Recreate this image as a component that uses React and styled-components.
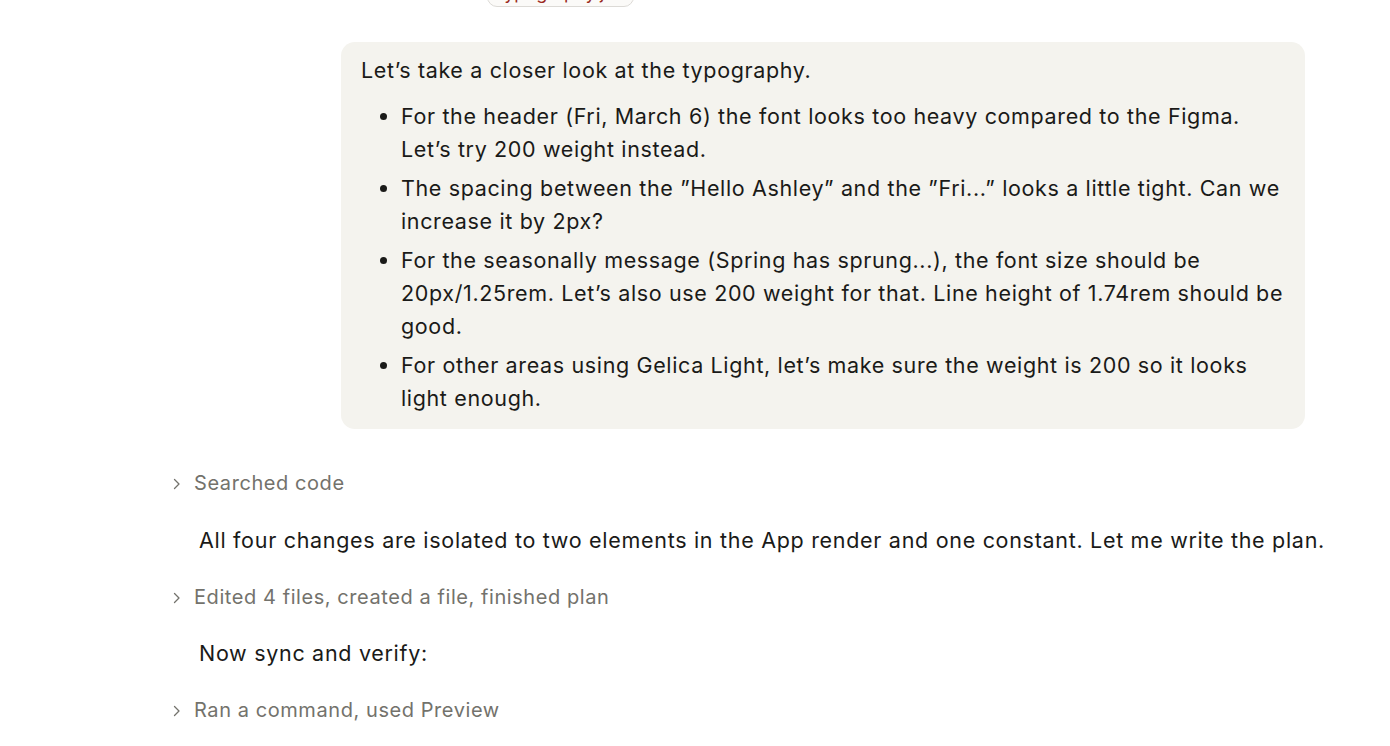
import React from "react";
import styled, { createGlobalStyle } from "styled-components";

const Global = createGlobalStyle`
  html, body { margin: 0; padding: 0; background: #ffffff; }
  body { font-family: Inter, "Noto Sans", sans-serif; color: #1a1a18; -webkit-font-smoothing: antialiased; }
  * { box-sizing: border-box; }
`;

const Page = styled.div`
  width: 1390px;
  height: 746px;
  overflow: hidden;
  display: flex;
  flex-direction: column;
  padding: 0 62px 0 170px;
`;

const ChipRow = styled.div`
  display: flex;
  justify-content: flex-start;
  padding-left: 317px;
  margin-top: -31px;
  height: 38px;
`;

const Chip = styled.div`
  width: 147px;
  height: 38px;
  border: 1px solid #dcdad6;
  border-radius: 10px;
  background: #fbfaf8;
  color: #9b2c22;
  font-size: 18px;
  line-height: 26px;
  padding: 10px 10px 0;
  white-space: nowrap;
  overflow: hidden;
`;

const Bubble = styled.div`
  align-self: flex-end;
  margin: 35px 23px 0 0;
  width: 964px;
  background: #f4f3ee;
  border-radius: 14px;
  padding: 12px 20px 14px 20px;
  font-size: 21.5px;
  line-height: 33px;
  letter-spacing: 0.64px;
`;

const Para = styled.p`
  margin: 0 0 13px 0;
`;

const List = styled.ul`
  margin: 0;
  padding-left: 40px;
  list-style: disc;
  display: flex;
  flex-direction: column;
  gap: 6px;
`;

const Item = styled.li``;

const Collapsed = styled.div`
  display: flex;
  align-items: center;
  gap: 10px;
  color: #73726c;
  font-size: 20px;
  line-height: 33px;
  margin-top: ${(p) => p.$top}px;
  letter-spacing: 0.57px;
`;

const Chevron = styled.svg`
  width: 14px;
  height: 14px;
  flex: none;
`;

const Message = styled.div`
  padding-left: 29px;
  font-size: 21.5px;
  line-height: 33px;
  margin-top: ${(p) => p.$top}px;
  color: #1a1a18;
  letter-spacing: 0.7px;
  white-space: nowrap;
`;

const Step = ({ top, children }) => (
  <Collapsed $top={top}>
    <Chevron viewBox="0 0 14 14" fill="none" stroke="#73726c" strokeWidth="1.3" strokeLinecap="round" strokeLinejoin="round">
      <path d="M4.5 2.5l4.5 4.5-4.5 4.5" />
    </Chevron>
    <span>{children}</span>
  </Collapsed>
);

export default function App() {
  return (
    <>
      <Global />
      <Page>
        <ChipRow>
          <Chip>typography.jsx</Chip>
        </ChipRow>
        <Bubble>
          <Para>Let’s take a closer look at the typography.</Para>
          <List>
            <Item>For the header (Fri, March 6) the font looks too heavy compared to the Figma. Let’s try 200 weight instead.</Item>
            <Item>The spacing between the ”Hello Ashley” and the ”Fri...” looks a little tight. Can we increase it by 2px?</Item>
            <Item>For the seasonally message (Spring has sprung...), the font size should be 20px/1.25rem. Let’s also use 200 weight for that. Line height of 1.74rem should be good.</Item>
            <Item>For other areas using Gelica Light, let’s make sure the weight is 200 so it looks light enough.</Item>
          </List>
        </Bubble>
        <Step top={38}>Searched code</Step>
        <Message $top={24}>All four changes are isolated to two elements in the App render and one constant. Let me write the plan.</Message>
        <Step top={24}>Edited 4 files, created a file, finished plan</Step>
        <Message $top={23}>Now sync and verify:</Message>
        <Step top={24}>Ran a command, used Preview</Step>
      </Page>
    </>
  );
}
